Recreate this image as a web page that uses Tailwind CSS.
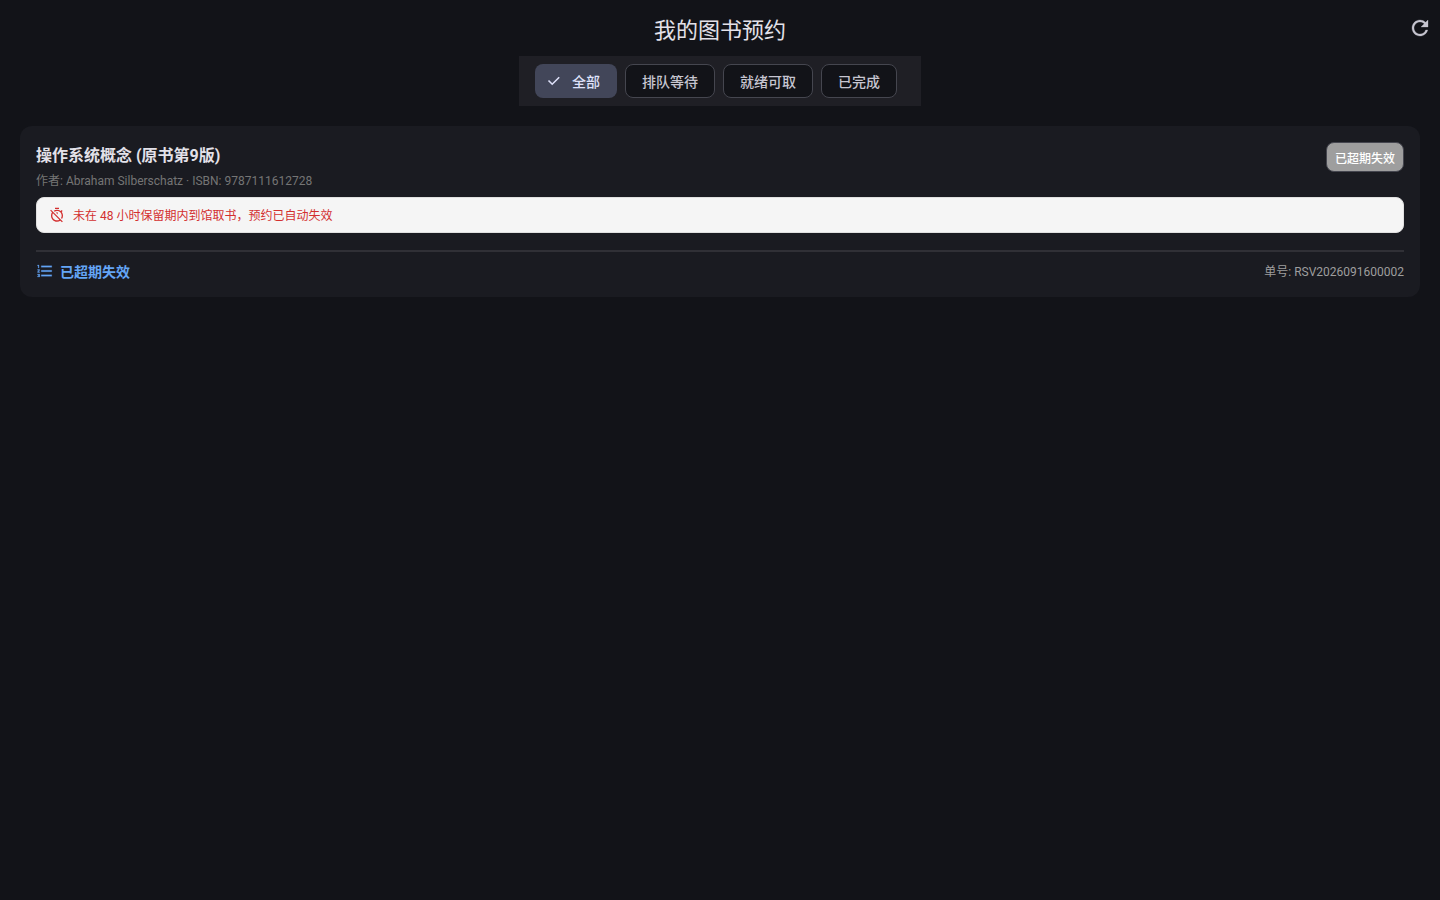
<!DOCTYPE html>
<html lang="zh-CN">
<head>
  <meta charset="UTF-8" />
  <meta name="viewport" content="width=device-width, initial-scale=1.0"/>
  <title>我的图书预约</title>

  <!-- Tailwind CSS -->
  <script src="https://cdn.jsdelivr.net/npm/@tailwindcss/browser@4"></script>
</head>
<body class="min-h-screen bg-[#121318] text-[#e3e1e9] font-['Roboto','Noto_Sans_CJK_SC',sans-serif]">

  <!-- App bar -->
  <header class="grid grid-cols-[1fr_auto_1fr] items-center h-14">
    <h1 class="col-start-2 text-[22px] leading-7 pt-[6px]">我的图书预约</h1>
    <button type="button" aria-label="刷新" class="justify-self-end p-2 text-[#c6c5d0]">
      <svg class="size-6" viewBox="0 0 24 24" fill="currentColor" stroke="currentColor" stroke-width=".3"><path d="M17.65 6.35A7.958 7.958 0 0 0 12 4c-4.42 0-7.99 3.58-7.99 8s3.57 8 7.99 8c3.73 0 6.84-2.55 7.73-6h-2.08A5.99 5.99 0 0 1 12 18c-3.31 0-6-2.69-6-6s2.69-6 6-6c1.66 0 3.14.69 4.22 1.78L13 11h7V4l-2.35 2.35z"/></svg>
    </button>
  </header>

  <!-- Status filter -->
  <nav class="flex gap-2 w-fit mx-auto bg-[#1f1f25] py-2 pl-4 pr-6 text-sm leading-5 font-medium text-[#c6c5d0]">
    <button type="button" class="flex items-center h-[34px] rounded-lg bg-[#424659] text-[#dee1f9] pl-[10px] pr-4">
      <svg class="size-[18px] mr-[9px]" viewBox="0 0 18 18" fill="none" stroke="currentColor" stroke-width="1.6"><path d="M3.500 8.500 7.200 12.200 14.200 5.200"/></svg>
      <span class="pt-[2px] pr-px">全部</span>
    </button>
    <button type="button" class="h-[34px] rounded-lg border border-[#45464f] bg-[#121318] px-4 pt-[2px]">排队等待</button>
    <button type="button" class="h-[34px] rounded-lg border border-[#45464f] bg-[#121318] px-4 pt-[2px]">就绪可取</button>
    <button type="button" class="h-[34px] rounded-lg border border-[#45464f] bg-[#121318] px-4 pt-[2px]">已完成</button>
  </nav>

  <!-- Reservation list -->
  <main class="p-5">
    <article class="rounded-xl bg-[#1a1b21] p-4">
      <div class="flex items-start justify-between">
        <div>
          <h2 class="text-base leading-6 font-bold pt-[2px]">操作系统概念 (原书第9版)</h2>
          <p class="text-xs leading-4 text-[#757575] mt-[5px]">作者: Abraham Silberschatz · ISBN: 9787111612728</p>
        </div>
        <span class="h-[30px] rounded-lg border border-[#45464f] bg-[#9e9e9e] px-2 pt-[2px] text-xs leading-7 font-medium text-white">已超期失效</span>
      </div>

      <div class="flex items-center gap-2 mt-2 h-9 rounded-lg border border-[#e0e0e0] bg-[#f5f5f5] px-3 text-xs text-[#d32f2f]">
        <!-- Timer off -->
        <svg class="size-4" viewBox="0 0 24 24" fill="currentColor"><path d="M15 1H9v2h6V1zm-4 8.17 2 2V8h-2v1.17zM19.04 4.55l-1.42 1.42A8.962 8.962 0 0 0 12 4c-1.83 0-3.53.55-4.95 1.48l1.46 1.46A6.97 6.97 0 0 1 12 6c3.87 0 7 3.13 7 7 0 1.27-.34 2.46-.94 3.49l1.45 1.45A8.878 8.878 0 0 0 21 13c0-2.12-.74-4.07-1.97-5.61l1.42-1.42-1.41-1.42zM3.02 4 1.75 5.27 4.5 8.03A8.905 8.905 0 0 0 3 13c0 4.97 4.02 9 9 9 1.84 0 3.55-.55 4.98-1.5l2.5 2.5 1.27-1.27L3.02 4zM12 20c-3.87 0-7-3.13-7-7 0-1.28.35-2.48.95-3.52l9.56 9.56c-1.03.61-2.23.96-3.51.96z"/></svg>
        <span class="pt-[2px]">未在 48 小时保留期内到馆取书，预约已自动失效</span>
      </div>

      <div class="flex items-center justify-between mt-[17px] border-t-2 border-[#303036] pt-[10px] -mb-px">
        <div class="flex items-start gap-[6px] text-sm leading-5 font-bold text-[#64a5f6]">
          <!-- Numbered list -->
          <svg class="size-[18px]" viewBox="0 0 24 24" fill="currentColor" stroke="currentColor" stroke-width=".3"><path d="M2 17h2v.5H3v1h1v.5H2v1h3v-4H2v1zm1-9h1V4H2v1h1v3zm-1 3h1.800L2 13.100v.9h3v-1H3.200L5 10.900V10H2v1zm5-6v2h14V5H7zm0 14h14v-2H7v2zm0-6h14v-2H7v2z"/></svg>
          <span>已超期失效</span>
        </div>
        <p class="text-xs leading-4 text-[#9e9e9e]">单号: RSV2026091600002</p>
      </div>
    </article>
  </main>

</body>
</html>
